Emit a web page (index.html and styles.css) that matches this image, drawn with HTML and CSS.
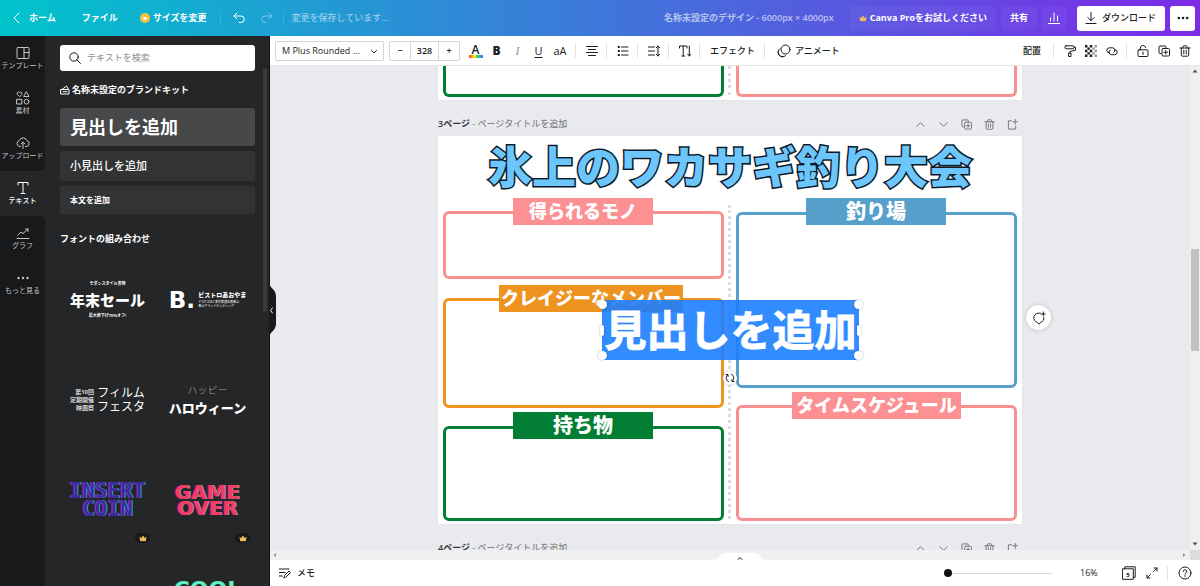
FILE: index.html
```html
<!DOCTYPE html>
<html lang="ja">
<head>
<meta charset="utf-8">
<title>名称未設定のデザイン</title>
<link rel="stylesheet" href="styles.css">
</head>
<body>
<svg class="defs" aria-hidden="true">
  <symbol id="i-up" viewBox="0 0 12 12"><path d="M2 8l4-4 4 4"/></symbol>
  <symbol id="i-down" viewBox="0 0 12 12"><path d="M2 4l4 4 4-4"/></symbol>
  <symbol id="i-copy" viewBox="0 0 12 12"><path d="M3 8.500H2a1 1 0 0 1-1-1V2a1 1 0 0 1 1-1h5a1 1 0 0 1 1 1v1"/><rect x="4" y="3.500" width="7.500" height="7.500" rx="1"/><path d="M7.750 5.500v3.500M6 7.250h3.500"/></symbol>
  <symbol id="i-trash" viewBox="0 0 12 12"><path d="M1 3h10M4 3V1.500a.7.7 0 0 1 .7-.7h2.600a.7.7 0 0 1 .7.700V3M2.300 3v7a1.200 1.200 0 0 0 1.200 1.200h5A1.200 1.200 0 0 0 9.700 10V3M4.800 5.200v3.800M7.200 5.200v3.800"/></symbol>
  <symbol id="i-add" viewBox="0 0 12 12"><path d="M5 2H1.500v9h8V7.500M9 .5v5M6.500 3h5"/></symbol>
  <symbol id="i-crown" viewBox="0 0 10 8"><path d="M.5 1.800l2.200 1.700L5 .3l2.300 3.200 2.200-1.700L8.500 7.500h-7z"/></symbol>
</svg>
<div class="app">
  <header class="topbar">
    <a class="nav home" href="#"><svg class="i10" viewBox="0 0 10 12"><path d="M7 1L2 6l5 5"/></svg>ホーム</a>
    <button class="nav file">ファイル</button>
    <button class="nav resize"><svg class="coin" viewBox="0 0 10 10"><circle cx="5" cy="5" r="5"/><path d="M3 3.900l1 .8 1-1.500 1 1.500 1-.8-.4 2.900H3.400z"/></svg>サイズを変更</button>
    <span class="tsep"></span>
    <button class="undo" aria-label="元に戻す"><svg class="i12" viewBox="0 0 12 12"><path d="M4 1L1 4l3 3M1 4h7a3 3 0 0 1 0 6.500H6"/></svg></button>
    <button class="undo faded" aria-label="やり直す"><svg class="i12" viewBox="0 0 12 12"><path d="M8 1l3 3-3 3M11 4H4a3 3 0 0 0 0 6.500h1"/></svg></button>
    <span class="tsep"></span>
    <span class="status">変更を保存しています...</span>
    <span class="doc-title">名称未設定のデザイン - 6000px × 4000px</span>
    <button class="tint pro"><svg class="crown" viewBox="0 0 10 8"><use href="#i-crown"/></svg>Canva Proをお試しください</button>
    <button class="tint share">共有</button>
    <button class="tint chart" aria-label="統計"><svg class="i12" viewBox="0 0 12 12"><path d="M0 11.500h12M2.500 9V6M6 9V1M9.500 9V4"/></svg></button>
    <button class="solid download"><svg class="i12" viewBox="0 0 12 12"><path d="M6 0v8.500M2.800 5.500L6 8.700l3.200-3.200M1 11.500h10"/></svg>ダウンロード</button>
    <button class="solid more" aria-label="その他"><svg class="dots" viewBox="0 0 12 4"><circle cx="1.800" cy="2" r="1.300"/><circle cx="6" cy="2" r="1.300"/><circle cx="10.200" cy="2" r="1.300"/></svg></button>
  </header>

  <div class="body">
    <nav class="rail">
      <a href="#"><svg class="i14" viewBox="0 0 14 14"><rect x="1" y="1.500" width="12" height="11" rx="1"/><path d="M8 1.500v11M8 6.500h5"/></svg>テンプレート</a>
      <a href="#"><svg class="i14" viewBox="0 0 14 14"><path d="M3.500 5.500L1.200 3.200a1.300 1.300 0 0 1 2.300-1.500 1.300 1.300 0 0 1 2.300 1.500zM10.500 1L13 5.500H8z"/><rect x="1" y="8.300" width="4.800" height="4.700"/><circle cx="10.500" cy="10.700" r="2.400"/></svg>素材</a>
      <a href="#"><svg class="i14" viewBox="0 0 14 14"><path d="M4.500 10.500H4A3 3 0 0 1 3.300 4.600a4 4 0 0 1 7.600 0 3 3 0 0 1-.9 5.900h-.5M7 12.500V6.200M5 8l2-2 2 2"/></svg>アップロード</a>
      <a class="current" href="#"><svg class="i14" viewBox="0 0 14 14"><path d="M2 4V1.500h10V4M7 1.500v11M5 12.500h4"/></svg>テキスト</a>
      <a href="#"><svg class="i14" viewBox="0 0 14 14"><path d="M1 12.500h12M2 9l3-3 2 1.500L12 3M9.500 3H12v2.500"/></svg>グラフ</a>
      <a href="#"><svg class="i14 fill" viewBox="0 0 14 14"><circle cx="2.500" cy="7" r="1.200"/><circle cx="7" cy="7" r="1.200"/><circle cx="11.500" cy="7" r="1.200"/></svg>もっと見る</a>
    </nav>

    <aside class="panel">
      <div class="panel-body">
        <label class="search"><svg class="i12" viewBox="0 0 12 12"><circle cx="5" cy="5" r="4.200"/><path d="M8 8l3.500 3.500"/></svg><input type="text" aria-label="テキストを検索" placeholder="テキストを検索"></label>
        <h2 class="kit"><svg class="kit-icon" viewBox="0 0 10 10"><path d="M1 4.500h8V9H1zM2 4.500l4.500-3.500 2 3.500M3 6.700h4"/></svg>名称未設定のブランドキット</h2>
        <button class="add add-h">見出しを追加</button>
        <button class="add add-s">小見出しを追加</button>
        <button class="add add-b">本文を追加</button>
        <h2 class="combo-title">フォントの組み合わせ</h2>
        <div class="combos">
          <button class="combo sale"><small>モダンスタイル書物</small><b>年末セール</b><small>最大値下げ70%オフ!</small></button>
          <button class="combo bistro"><b>B.</b><span><strong>ビストロあおやま</strong><small>〒107-0062 東京都港区南青山</small><small>青山グランドビルディング</small></span></button>
          <button class="combo film"><span class="film-l"><i>第10回</i><i>定期開催</i><i>映画祭</i></span><span class="film-r"><i>フィルム</i><i>フェスタ</i></span></button>
          <button class="combo hallo"><span>ハッピー</span><b>ハロウィーン</b></button>
          <button class="combo insert"><b>INSERT<br>COIN</b><span class="badge"><svg class="crown" viewBox="0 0 10 8"><use href="#i-crown"/></svg></span></button>
          <button class="combo game"><b>GAME<br>OVER</b><span class="badge"><svg class="crown" viewBox="0 0 10 8"><use href="#i-crown"/></svg></span></button>
          <span class="combo"></span>
          <button class="combo cool"><b>COOL</b></button>
        </div>
      </div>
      <span class="panel-thumb"></span>
      <button class="collapse" aria-label="パネルを閉じる"><svg viewBox="0 0 8 56"><path class="bulge" d="M0 0c0 6 7 7 7 14v28c0 7-7 8-7 14z"/><path class="arrow" d="M3.500 26L1.500 28.500l2 2.500"/></svg></button>
    </aside>

    <main class="editor">
      <div class="toolbar">
        <div class="font"><select aria-label="フォント"><option>M Plus Rounded ...</option></select><svg class="chev" viewBox="0 0 8 8"><path d="M1.500 2.500L4 5l2.500-2.500"/></svg></div>
        <div class="size"><button aria-label="小さく">−</button><input type="text" aria-label="文字サイズ" value="328"><button aria-label="大きく">+</button></div>
        <button class="tool color" aria-label="文字色">A<span class="rainbow"></span></button>
        <button class="tool bold">B</button>
        <button class="tool italic">I</button>
        <button class="tool under">U</button>
        <button class="tool case">aA</button>
        <span class="sep"></span>
        <button class="tool" aria-label="揃え"><svg class="i12" viewBox="0 0 12 12"><path d="M0 1.500h12M2.500 4.500h7M0 7.500h12M2.500 10.500h7"/></svg></button>
        <span class="sep"></span>
        <button class="tool" aria-label="リスト"><svg class="i12" viewBox="0 0 12 12"><path d="M4.500 2H11M4.500 6H11M4.500 10H11"/><path class="fat" d="M.8 2h2M.8 6h2M.8 10h2"/></svg></button>
        <span class="sep"></span>
        <button class="tool" aria-label="間隔"><svg class="i12" viewBox="0 0 12 12"><path d="M0 2h6.500M0 6h6.500M0 10h6.500M10 1v10M8.300 2.700L10 1l1.700 1.700M8.300 9.300L10 11l1.700-1.700"/></svg></button>
        <span class="sep"></span>
        <button class="tool" aria-label="縦書き"><svg class="i12" viewBox="0 0 12 12"><path d="M.5 3V1H8v2M4.200 1v10M2.800 11h2.800M10.300 1v10M8.700 9.200l1.600 1.800 1.600-1.800"/></svg></button>
        <span class="sep"></span>
        <button class="text-tool">エフェクト</button>
        <span class="sep"></span>
        <button class="text-tool animate"><svg class="i14" viewBox="0 0 14 14"><circle cx="8.500" cy="5.500" r="4.500"/><path d="M3 4.500a4.500 4.500 0 0 0 5.500 7.300M1.200 7a4.500 4.500 0 0 0 4.500 6"/></svg>アニメート</button>
        <button class="text-tool place">配置</button>
        <span class="sep"></span>
        <button class="tool" aria-label="スタイルをコピー"><svg class="i12" viewBox="0 0 12 12"><rect x="1" y=".8" width="9" height="3" rx="1"/><path d="M10 2.200h1.500v3L6 6.500V8M5 8h2v3.500H5z"/></svg></button>
        <button class="tool" aria-label="透明度"><svg class="i12 fill" viewBox="0 0 12 12"><path d="M0 0h2.400v2.400H0zM4.800 0h2.400v2.400H4.800zM2.400 2.400h2.400v2.400H2.400zM0 4.800h2.400v2.400H0zM4.800 4.800h2.400v2.400H4.800zM2.400 7.200h2.400v2.400H2.400zM0 9.600h2.400V12H0zM4.800 9.600h2.400V12H4.800z"/><path opacity=".45" d="M9.600 0H12v2.400H9.600zM7.200 2.400h2.400v2.400H7.200zM9.600 4.800H12v2.400H9.600zM7.200 7.200h2.400v2.400H7.200zM9.600 9.600H12V12H9.600z"/></svg></button>
        <button class="tool" aria-label="リンク"><svg class="i12" viewBox="0 0 12 12"><path d="M3.300 7.800a2.500 2.500 0 0 1 0-5h3.200a2.500 2.500 0 0 1 1.500 4.500M8.700 4.700a2.500 2.500 0 0 1 0 5H5.500A2.500 2.500 0 0 1 4 5.200"/></svg></button>
        <span class="sep"></span>
        <button class="tool" aria-label="ロック"><svg class="i12" viewBox="0 0 12 12"><rect x="1" y="4.800" width="10" height="6.700" rx="1"/><path d="M3.300 4.800V3a2.700 2.700 0 0 1 5.300-.5M6 7v2.500"/></svg></button>
        <button class="tool" aria-label="複製"><svg class="i12"><use href="#i-copy"/></svg></button>
        <button class="tool" aria-label="削除"><svg class="i12"><use href="#i-trash"/></svg></button>
      </div>

      <div class="workspace">
        <div class="stage">
          <div class="sheet tail">
            <div class="frame left green"></div>
            <span class="divider"></span>
            <div class="frame right pink"></div>
          </div>
          <div class="page-head">
            <span class="page-name"><b>3ページ</b> - ページタイトルを追加</span>
            <button aria-label="上へ"><svg class="i11"><use href="#i-up"/></svg></button>
            <button aria-label="下へ"><svg class="i11"><use href="#i-down"/></svg></button>
            <button aria-label="ページを複製"><svg class="i11"><use href="#i-copy"/></svg></button>
            <button aria-label="ページを削除"><svg class="i11"><use href="#i-trash"/></svg></button>
            <button aria-label="ページを追加"><svg class="i11"><use href="#i-add"/></svg></button>
          </div>
          <div class="sheet page">
            <h1 class="title">氷上のワカサギ釣り大会</h1>
            <span class="divider"></span>
            <div class="frame left get pink"></div>
            <div class="frame left member orange"></div>
            <div class="frame left items green"></div>
            <div class="frame right place-box blue"></div>
            <div class="frame right time pink"></div>
            <div class="banner b-get">得られるモノ</div>
            <div class="banner b-place">釣り場</div>
            <div class="banner b-member">クレイジーなメンバー</div>
            <div class="banner b-items">持ち物</div>
            <div class="banner b-time">タイムスケジュール</div>
            <div class="picked">見出しを追加
              <span class="knob tl"></span><span class="knob tr"></span><span class="knob bl"></span><span class="knob br"></span>
              <span class="pill l"></span><span class="pill r"></span>
              <span class="rotate"><svg class="i10" viewBox="0 0 10 10"><path d="M3.500 8.800A4 4 0 0 1 2.500 2M1 1.500h2v2M6.500 1.200A4 4 0 0 1 7.500 8M9 8.500H7v-2"/></svg></span>
            </div>
            <button class="comment" aria-label="コメントを追加"><svg class="i14" viewBox="0 0 14 14"><path d="M8.500 2.200A5 4.700 0 1 0 5.500 11.500l1.500 1.700 1.500-1.700A5 4.700 0 0 0 11.800 6.500M11.300 1v4M9.300 3h4"/></svg></button>
          </div>
          <div class="page-head next">
            <span class="page-name"><b>4ページ</b> - ページタイトルを追加</span>
            <button aria-label="上へ"><svg class="i11"><use href="#i-up"/></svg></button>
            <button aria-label="下へ"><svg class="i11"><use href="#i-down"/></svg></button>
            <button aria-label="ページを複製"><svg class="i11"><use href="#i-copy"/></svg></button>
            <button aria-label="ページを削除"><svg class="i11"><use href="#i-trash"/></svg></button>
            <button aria-label="ページを追加"><svg class="i11"><use href="#i-add"/></svg></button>
          </div>
        </div>
        <div class="vbar"><svg class="tri" viewBox="0 0 6 6"><path d="M3 1.500L5.500 4.500h-5z"/></svg><span class="vthumb"></span><svg class="tri" viewBox="0 0 6 6"><path d="M3 4.500L.5 1.500h5z"/></svg></div>
      </div>
      <div class="hbar"><svg class="tri" viewBox="0 0 6 6"><path d="M1.500 3L4 1v4z"/></svg><svg class="tri end" viewBox="0 0 6 6"><path d="M4.500 3L2 1v4z"/></svg><span class="corner"></span>
        <button class="drawer" aria-label="ページ一覧"><svg viewBox="0 0 54 8"><path class="hill" d="M0 8C6 8 6 1 13 1h28c7 0 7 7 13 7z"/><path class="arrow" d="M25 7.500l2-2 2 2"/></svg></button>
      </div>
      <footer class="footer">
        <button class="memo"><svg class="i12" viewBox="0 0 12 12"><path d="M0 2h10M0 5.500h6M0 9h3.500M5 10.500l.5-2L10 4l1.500 1.500L7 10z"/></svg>メモ</button>
        <input class="zoom" type="range" aria-label="ズーム" min="0" max="100" value="0">
        <span class="percent">16%</span>
        <button class="foot-btn" aria-label="ページ"><svg class="i14" viewBox="0 0 14 14"><rect x=".8" y="2.800" width="10.500" height="10.500"/><path d="M2.800 2.800V.8h10.400v10.500h-1.900"/><text x="6" y="10.500">5</text></svg></button>
        <button class="foot-btn" aria-label="全画面"><svg class="i12" viewBox="0 0 12 12"><path d="M7.500 4.500L11 1M8 1h3v3M4.500 7.500L1 11M1 8v3h3"/></svg></button>
        <span class="sep"></span>
        <button class="foot-btn" aria-label="ヘルプ"><svg class="i14" viewBox="0 0 14 14"><circle cx="7" cy="7" r="6"/><path d="M5.200 5.500a1.800 1.800 0 1 1 2.600 1.600c-.6.300-.8.600-.8 1.200M7 9.700v.6"/></svg></button>
      </footer>
    </main>
  </div>
</div>
</body>
</html>
```

FILE: styles.css
```css
* { box-sizing: border-box; }
body {
  margin: 0;
  font: 9px/12px "Open Sans", "Noto Sans CJK JP", sans-serif;
  color: #1b1d20;
}
button, input, select { font: inherit; color: inherit; margin: 0; padding: 0; border: 0; background: none; }
button { display: flex; align-items: center; justify-content: center; white-space: nowrap; }
a { color: inherit; text-decoration: none; }
h1, h2 { margin: 0; font-size: inherit; }
svg { display: block; flex: none; fill: none; stroke: currentColor; stroke-width: 1; stroke-linecap: round; stroke-linejoin: round; }
.defs { position: absolute; width: 0; height: 0; }
.i10 { width: 10px; height: 12px; }
.i11 { width: 11px; height: 11px; }
.i12 { width: 12px; height: 12px; }
.i14 { width: 14px; height: 14px; }
.fill { fill: currentColor; stroke: none; }
.crown { width: 8px; height: 7px; fill: #f0b95a; stroke: none; }

.app { display: flex; flex-direction: column; height: 100vh; overflow: hidden; }

/* top bar */
.topbar {
  flex: none; display: flex; align-items: center; height: 36px; padding: 0 5px 0 12px;
  background: linear-gradient(90deg, #00c4cc, #7d2ae8);
  color: #fff; font-weight: 700; white-space: nowrap;
}
.nav { display: flex; align-items: center; }
.home { gap: 7px; margin-right: 26px; }
.file { margin-right: 22px; }
.resize { gap: 3px; margin-right: 14px; }
.coin { width: 10px; height: 10px; fill: #f9c23c; stroke: none; }
.coin path { fill: #fff; }
.tsep { width: 1px; height: 16px; background: rgba(255, 255, 255, .12); }
.undo { margin-left: 12px; width: 12px; }
.undo + .undo { margin: 0 10px 0 16px; }
.faded { opacity: .4; }
.status { margin-left: 7px; font-weight: 400; opacity: .6; }
.doc-title { margin-left: auto; margin-right: 16px; font-weight: 600; opacity: .6; }
.tint { height: 25px; border-radius: 3px; background: rgba(255, 255, 255, .04); }
.pro { gap: 3px; padding: 0 9px; margin-right: 5px; }
.share { padding: 0 9px; margin-right: 5px; }
.chart { width: 25px; margin-right: 10px; }
.solid { height: 25px; border-radius: 3px; background: #fff; color: #1b1d20; font-weight: 500; }
.download { gap: 5px; padding: 0 9px 0 8px; margin-right: 5px; }
.more { width: 25px; }
.dots { width: 12px; height: 4px; fill: currentColor; stroke: none; }

.body { flex: 1; display: flex; min-height: 0; }

/* rail */
.rail { flex: none; width: 45px; background: #252627; color: #c4c6c9; font-size: 7px; line-height: 10px; display: flex; flex-direction: column; }
.rail a { flex: none; height: 45px; display: flex; flex-direction: column; align-items: center; justify-content: center; gap: 1px; background: #18191b; white-space: nowrap; }
.rail a:last-child { flex: 1; justify-content: flex-start; padding-top: 10px; }
.rail a:nth-child(3) { border-bottom-right-radius: 5px; }
.rail a:nth-child(5) { border-top-right-radius: 5px; }
.rail .current { background: #252627; color: #fff; font-weight: 500; }

/* panel */
.panel { flex: none; position: relative; z-index: 2; width: 225px; background: #252627; color: #fff; border-right: 1px solid #141516; }
.panel-body { height: 100%; overflow: hidden; padding: 9px 14px 0 15px; }
.search { display: flex; align-items: center; gap: 6px; height: 26px; padding: 0 9px; border-radius: 3px; background: #fff; color: #1b1d20; }
.search input { flex: 1; min-width: 0; outline: 0; }
.search input::placeholder { color: #8b8d90; }
.kit { display: flex; align-items: center; gap: 2px; height: 12px; margin: 13px 0 12px; font-weight: 600; }
.kit-icon { width: 10px; height: 10px; }
.add { width: 100%; justify-content: flex-start; padding: 0 10px; margin-bottom: 5px; border-radius: 3px; background: #323335; }
.add-h { height: 38px; background: #47484a; font-size: 18px; font-weight: 700; }
.add-s { height: 30px; font-size: 11px; font-weight: 500; }
.add-b { height: 28px; font-size: 8px; font-weight: 700; margin-bottom: 0; }
.combo-title { margin: 19px 0 7px; font-weight: 600; }
.combos { display: grid; grid-template-columns: 1fr 1fr; grid-auto-rows: 95px; gap: 5px; }
.combo { position: relative; white-space: nowrap; min-width: 0; }
.combo small { font-size: 4px; line-height: 6px; display: block; font-weight: 700; }
.combo i { font-style: normal; display: block; }
.sale { flex-direction: column; gap: 3px; }
.sale b { font-size: 15px; line-height: 20px; font-weight: 900; }
.bistro { gap: 3px; }
.bistro > b { font: 700 23px/26px "DejaVu Sans", sans-serif; }
.bistro span { text-align: left; }
.bistro strong { display: block; font-size: 6px; line-height: 9px; font-weight: 900; }
.bistro small { font-size: 3px; line-height: 4px; font-weight: 400; }
.film { gap: 3px; }
.film-l { font-size: 6px; line-height: 8px; text-align: right; font-weight: 700; color: #d8d8d8; }
.film-r { font-size: 12px; line-height: 14px; }
.hallo { flex-direction: column; gap: 2px; }
.hallo span { font-size: 10px; line-height: 14px; font-weight: 300; color: #aaa; }
.hallo b { font-size: 13px; line-height: 18px; font-weight: 900; }
.insert b { font: 700 21px/18px "DejaVu Sans Mono", monospace; color: #3c2a9e; text-shadow: 1px 0 #2fa5d4, -1px 0 #a52bc4; }
.game b { font: 700 20px/16px "DejaVu Sans", sans-serif; color: #ef3d63; text-shadow: 1px 0 #7b95a8, -1px 0 #d0128a; }
.badge { position: absolute; right: 5px; bottom: 4px; width: 15px; height: 10px; border-radius: 5px; background: #18191b; display: flex; align-items: center; justify-content: center; }
.cool { align-items: flex-start; padding-top: 26px; }
.cool b { font: 700 22px/24px "DejaVu Sans", sans-serif; color: #5cf2c4; }
.panel-thumb { position: absolute; right: 2px; top: 32px; width: 4px; height: 244px; border-radius: 2px; background: #3a3b3d; }
.collapse { position: absolute; left: 100%; top: 246px; }
.collapse svg { width: 8px; height: 56px; }
.bulge { fill: #18191b; stroke: none; }
.arrow { stroke: currentColor; }

/* editor */
.editor { flex: 1; min-width: 0; display: flex; flex-direction: column; background: #fff; }
.toolbar { flex: none; height: 30px; display: flex; align-items: center; padding: 0 5px; border-bottom: 1px solid #e3e4e8; }
.font { position: relative; width: 109px; height: 20px; margin-right: 5px; }
.font select { width: 100%; height: 100%; padding: 0 18px 0 6px; border: 1px solid #d5d6da; border-radius: 2px; appearance: none; font-weight: 500; }
.chev { position: absolute; right: 6px; top: 7px; width: 8px; height: 8px; }
.size { display: flex; width: 71px; height: 20px; margin-right: 5px; border: 1px solid #d5d6da; border-radius: 2px; font-weight: 600; }
.size button { width: 20px; }
.size input { flex: 1; min-width: 0; text-align: center; border: solid #d5d6da; border-width: 0 1px; }
.tool { flex: none; width: 21px; height: 22px; }
.fat { stroke-width: 2; stroke-linecap: butt; }
.color { flex-direction: column; font-size: 12px; line-height: 11px; font-weight: 600; }
.rainbow { width: 14px; height: 3px; border-radius: 1px; background: linear-gradient(90deg, #e33, #f90, #fe3, #3c5, #2bd, #63d); }
.bold { font-size: 12px; font-weight: 800; }
.italic { font: italic 13px/16px "Liberation Serif", serif; color: #9a9b9e; }
.under { font-size: 11px; text-decoration: underline; text-underline-offset: 2px; }
.case { font-size: 11px; width: 22px; }
.sep { flex: none; width: 1px; height: 15px; margin: 0 5px 0 4px; background: #e3e4e8; }
.text-tool { flex: none; padding: 0 5px; font-weight: 500; }
.animate { gap: 4px; padding-left: 7px; }
.place { margin-left: auto; padding-right: 8px; }

.workspace { flex: 1; min-height: 0; display: flex; background: #e9eaee; }
.stage { flex: 1; min-width: 0; overflow: hidden; display: flex; flex-direction: column; align-items: center; }
.sheet { position: relative; flex: none; width: 584px; background: #fff; box-shadow: 0 0 2px rgba(0, 0, 0, .06); }
.tail { height: 34px; }
.page { height: 388px; }
.page-head { flex: none; width: 584px; height: 24px; display: flex; align-items: center; margin-top: 12px; color: #6d6f74; gap: 12px; padding-right: 4px; }
.page-head b { font-weight: 600; color: #33353a; }
.page-name { margin-right: auto; }

.frame { position: absolute; border: 3px solid; border-radius: 6px; width: 281px; }
.left { left: 5px; }
.right { left: 298px; }
.tail .frame { top: 0; height: 31px; border-top: 0; border-radius: 0 0 6px 6px; }
.pink { border-color: #f88f91; }
.orange { border-color: #ee9220; }
.green { border-color: #017e33; }
.blue { border-color: #56a0cb; }
.divider { position: absolute; left: 290px; top: 69px; bottom: 5px; border-left: 3px dotted #dcdcde; }
.tail .divider { top: 0; }
.title {
  position: absolute; left: 0; right: 0; top: 6px; text-align: center; white-space: nowrap;
  font-size: 44px; line-height: 50px; font-weight: 900; color: #6cc5fb;
  -webkit-text-stroke: 3px #0b1a26; paint-order: stroke fill;
}
.get { top: 75px; height: 68px; }
.member { top: 162px; height: 110px; }
.items { top: 290px; height: 95px; }
.place-box { top: 76px; height: 176px; }
.time { top: 269px; height: 116px; }
.banner { position: absolute; width: 140px; height: 27px; text-align: center; color: #fff; font-size: 20px; line-height: 27px; font-weight: 900; white-space: nowrap; }
.b-get { left: 75px; top: 62px; background: #fc9093; font-size: 18px; }
.b-place { left: 368px; top: 62px; background: #56a0cb; }
.b-member { left: 61px; top: 149px; width: 184px; background: #ee9220; font-size: 18px; }
.b-items { left: 75px; top: 276px; background: #017e33; }
.b-time { left: 354px; top: 256px; width: 169px; background: #fc9093; font-size: 18px; }
.picked {
  position: absolute; left: 164px; top: 164px; width: 257px; height: 60px; line-height: 60px;
  display: flex; justify-content: center; white-space: nowrap;
  background: rgba(28, 126, 255, .9); color: #fff; font-size: 42px; font-weight: 700; -webkit-text-stroke: 1px #fff;
}
.knob { position: absolute; width: 9px; height: 9px; border-radius: 50%; background: #fff; box-shadow: 0 0 2px rgba(0, 0, 0, .35); }
.tl { left: -4px; top: 0; }
.tr { right: -4px; top: 0; }
.bl { left: -4px; bottom: 0; }
.br { right: -4px; bottom: 0; }
.pill { position: absolute; top: 25px; width: 4px; height: 11px; border-radius: 2px; background: #fff; box-shadow: 0 0 2px rgba(0, 0, 0, .35); }
.l { left: -2px; }
.r { right: -2px; }
.rotate { position: absolute; left: 121px; top: 71px; width: 14px; height: 14px; border-radius: 50%; background: #fff; box-shadow: 0 0 2px rgba(0, 0, 0, .3); color: #1b1d20; display: flex; align-items: center; justify-content: center; }
.rotate svg { width: 10px; height: 10px; }
.comment { position: absolute; left: 588px; top: 169px; width: 25px; height: 25px; border-radius: 50%; background: #fff; box-shadow: 0 0 4px rgba(0, 0, 0, .2); }

.vbar { flex: none; width: 10px; background: #f0f0f1; display: flex; flex-direction: column; align-items: center; justify-content: space-between; padding: 2px 0 3px; }
.vthumb { width: 8px; height: 102px; background: #c1c1c1; margin-bottom: 16px; }
.tri { width: 6px; height: 6px; fill: #505050; stroke: none; }
.hbar { flex: none; position: relative; height: 10px; display: flex; align-items: center; background: #f0f0f1; padding-left: 2px; }
.hbar .tri { fill: #909090; }
.end { margin-left: auto; margin-right: 3px; }
.corner { width: 10px; height: 100%; background: #dcdcdc; }
.drawer { position: absolute; left: 10px; right: 0; bottom: 0; margin: auto; width: 60px; }
.drawer svg { width: 54px; height: 8px; }
.hill { fill: #fff; stroke: none; }
.footer { flex: none; height: 26px; display: flex; align-items: center; padding: 0 4px 0 9px; background: #fff; }
.memo { gap: 6px; font-weight: 500; margin-right: auto; }
.zoom { width: 108px; height: 10px; appearance: none; margin-right: 28px; background: linear-gradient(#d9dadd, #d9dadd) center / 100% 1px no-repeat; }
.zoom::-webkit-slider-thumb { appearance: none; width: 8px; height: 8px; border-radius: 50%; background: #0e1013; }
.percent { width: 37px; font-weight: 500; }
.foot-btn { width: 23px; }
.foot-btn text { font: 700 6px "Open Sans", sans-serif; fill: currentColor; stroke: none; text-anchor: middle; }
```
